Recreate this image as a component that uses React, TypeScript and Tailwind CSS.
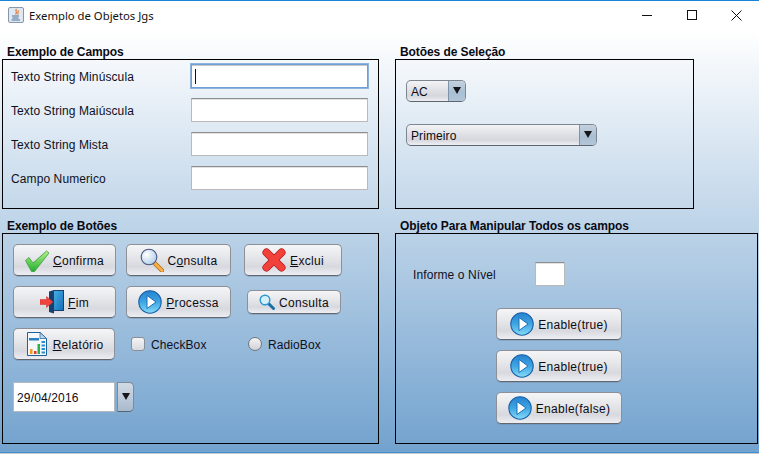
import type { ReactNode } from "react"

const btn =
  "flex items-center justify-center gap-[4px] rounded-[5px] border border-[#8d9096] border-b-[#63666c] bg-[linear-gradient(#f5f5f7,#e6e7ea_40%,#d8d9df_72%,#eceef2)] text-[12px] text-[#0c0c14] shadow-[0_1px_0_#5f7fa055]"
const btnText = "pt-[2px] tracking-[0.3px]"
const label = "pt-[2px] text-[12px] tracking-[0.1px] text-[#10101c]"
const field = "border border-[#b9b9b9] border-t-[#8e8e8e] bg-white shadow-[inset_0_1px_0_#e2e2e2]"
const combo =
  "flex items-stretch overflow-hidden rounded-[5px] border border-[#7d8590] border-b-[#5d6570] bg-[linear-gradient(#f4f4f6,#e0e1e6_45%,#d6d7dd_75%,#eeeff3)]"
const arrowPart = "flex w-[17px] items-center justify-center border-l border-[#7d93aa] bg-[linear-gradient(#c4d1de,#a9bfd4_60%,#b3c6d8)]"

function Arrow() {
  return (
    <svg width="8" height="7" viewBox="0 0 8 7" className="-mt-[2px]">
      <path d="M0 0h8L4 7z" fill="#15151a" />
    </svg>
  )
}

function CheckIcon() {
  return (
    <svg width="24" height="24" viewBox="0 0 24 24">
      <defs>
        <linearGradient id="chk" x1="0" y1="0" x2="0" y2="1">
          <stop offset="0" stopColor="#b4f08a" />
          <stop offset="1" stopColor="#22b030" />
        </linearGradient>
      </defs>
      <path d="M0.5 12.5L4 9.5L8 15L21.5 3L24 5L9.5 23.5L6.5 23.5Z" fill="url(#chk)" stroke="#3d9a3c" strokeWidth="0.8" strokeLinejoin="round" />
    </svg>
  )
}

function SearchIcon() {
  return (
    <svg width="24" height="24" viewBox="0 0 24 24">
      <defs>
        <radialGradient id="lens" cx="0.35" cy="0.35" r="0.8">
          <stop offset="0" stopColor="#ffffff" />
          <stop offset="1" stopColor="#a6c8e6" />
        </radialGradient>
      </defs>
      <path d="M14.5 15L22 22.5" stroke="#b06a14" strokeWidth="4.4" strokeLinecap="round" />
      <path d="M14.5 15L22 22.5" stroke="#f7ae45" strokeWidth="3" strokeLinecap="round" />
      <circle cx="9" cy="9" r="7.8" fill="url(#lens)" stroke="#4a5680" strokeWidth="1.1" />
    </svg>
  )
}

function SmallSearchIcon() {
  return (
    <svg width="16" height="16" viewBox="0 0 16 16">
      <path d="M9.5 9.5L14.5 14.5" stroke="#1c6ea8" strokeWidth="3" strokeLinecap="round" />
      <circle cx="6" cy="6" r="4.8" fill="#d6f0fb" stroke="#2f97d0" strokeWidth="1.4" />
    </svg>
  )
}

function CrossIcon() {
  return (
    <svg width="24" height="24" viewBox="0 0 24 24">
      <path d="M4.5 4.5L19.5 19.5M19.5 4.5L4.5 19.5" stroke="#b01c1c" strokeWidth="8" strokeLinecap="round" />
      <path d="M4.5 4.5L19.5 19.5M19.5 4.5L4.5 19.5" stroke="#f2403a" strokeWidth="6.6" strokeLinecap="round" />
    </svg>
  )
}

function DoorIcon() {
  return (
    <svg width="24" height="24" viewBox="0 0 24 24">
      <defs>
        <linearGradient id="door" x1="0" y1="0" x2="1" y2="1">
          <stop offset="0" stopColor="#48aee6" />
          <stop offset="1" stopColor="#1270b8" />
        </linearGradient>
      </defs>
      <path d="M9 1.5L14 0H24V21H14V23.5L9 22Z" fill="#17406e" />
      <path d="M14 1H23V20H14Z" fill="url(#door)" />
      <path d="M0 9.5H6.5V6.5L13 12L6.5 17.5V14.5H0Z" fill="#f0433c" stroke="#c9302a" strokeWidth="0.5" />
    </svg>
  )
}

function PlayIcon() {
  return (
    <svg width="24" height="24" viewBox="0 0 24 24">
      <defs>
        <linearGradient id="play" x1="0" y1="0" x2="0" y2="1">
          <stop offset="0" stopColor="#2582cf" />
          <stop offset="0.5" stopColor="#3ea5e2" />
          <stop offset="1" stopColor="#86dbf8" />
        </linearGradient>
      </defs>
      <circle cx="12" cy="12" r="11.2" fill="url(#play)" stroke="#1a5ea6" strokeWidth="1.1" />
      <path d="M9 5.5L18 12L9 18.5Z" fill="#fff" stroke="#1e6fb8" strokeWidth="1" strokeLinejoin="round" />
    </svg>
  )
}

function ReportIcon() {
  return (
    <svg width="24" height="24" viewBox="0 0 24 24">
      <path d="M2.5 0.5H15L21.5 6.5V23.5H2.5Z" fill="#f4f8fc" stroke="#1f6098" />
      <path d="M15 0.5V6.5H21.5Z" fill="#bcd4ea" stroke="#1f6098" strokeWidth="0.7" />
      <path d="M4 6H14V8.5H4Z" fill="#2a7fc0" />
      <path d="M5 17H7.5V22H5Z" fill="#f59a23" />
      <path d="M9 19H11.5V22H9Z" fill="#e03a30" />
      <path d="M12.5 12H15V22H12.5Z" fill="#2fb04a" />
      <path d="M16.5 9H20V11H16.5ZM16.5 12.5H20V14.5H16.5ZM16.5 16H20V18H16.5ZM16.5 19.5H20V21.5H16.5Z" fill="#2a8fd0" />
    </svg>
  )
}

function JavaIcon() {
  return (
    <svg width="16" height="16" viewBox="0 0 16 16">
      <rect x="0.5" y="0.5" width="15" height="15" rx="1.5" fill="#dfe8f1" stroke="#8797ab" />
      <path d="M8.5 2C6.5 4 10 5 7.5 7.5M10.5 3.5C9 5 11 5.5 9.5 7.5" stroke="#e0722a" strokeWidth="1.1" fill="none" />
      <path d="M4 9H11M4.5 11H10.5M3.5 13H12" stroke="#4c7199" strokeWidth="1" />
    </svg>
  )
}

function Section({ title, width, height, children }: { title: string; width: string; height: string; children: ReactNode }) {
  return (
    <div className={`flex flex-col ${width}`}>
      <div className="flex flex-1 items-end pl-[5px] text-[12px] leading-[14px] font-bold tracking-[-0.08px] text-[#0a0a14]">{title}</div>
      <div className={`border border-black ${height}`}>{children}</div>
    </div>
  )
}

function CampoRow({ text, focused }: { text: string; focused?: boolean }) {
  return (
    <div className="flex h-[24px] items-center pl-[8px]">
      <span className={`w-[180px] ${label}`}>{text}</span>
      {focused ? (
        <div className="flex h-[24px] w-[177px] items-center border border-[#6f9fd6] bg-white pl-[3px] shadow-[0_0_0_1px_#8fb4dc,inset_0_1px_0_#c9c9c9]">
          <div className="h-[15px] w-[1px] bg-[#111]" />
        </div>
      ) : (
        <div className={`h-[24px] w-[177px] ${field}`} />
      )}
    </div>
  )
}

export default function App() {
  return (
    <div className="flex h-[454px] w-[759px] flex-col overflow-hidden border-t border-[#1a84d8] bg-white font-['Liberation_Sans',Arial,sans-serif]">
      {/* Title bar */}
      <div className="flex h-[29px] items-center bg-white">
        <div className="flex flex-1 items-center gap-[5px] pl-[8px] pb-[1px]">
          <JavaIcon />
          <span className="pt-[2px] font-['Noto_Sans',sans-serif] text-[11.3px] text-[#111]">Exemplo de Objetos Jgs</span>
        </div>
        <div className="flex h-[29px] w-[135px] pb-[1px]">
          <div className="flex w-[45px] items-center justify-center">
            <div className="h-[1px] w-[10px] bg-[#111]" />
          </div>
          <div className="flex w-[45px] items-center justify-center">
            <div className="h-[10px] w-[10px] border border-[#111]" />
          </div>
          <div className="flex w-[45px] items-center justify-center">
            <svg width="11" height="11" viewBox="0 0 11 11">
              <path d="M0.5 0.5L10.5 10.5M10.5 0.5L0.5 10.5" stroke="#111" fill="none" />
            </svg>
          </div>
        </div>
      </div>

      {/* Content */}
      <div className="flex h-[422px] flex-col bg-[linear-gradient(#ffffff,#72a2ce)] pl-[2px]">
        <div className="flex h-[179px] gap-[16px]">
          <Section title="Exemplo de Campos" width="w-[377px]" height="h-[150px]">
            <div className="flex flex-col gap-[10px] pt-[4px]">
              <CampoRow text="Texto String Minúscula" focused />
              <CampoRow text="Texto String Maiúscula" />
              <CampoRow text="Texto String Mista" />
              <CampoRow text="Campo Numerico" />
            </div>
          </Section>
          <Section title="Botões de Seleção" width="w-[299px]" height="h-[150px]">
            <div className="flex flex-col gap-[22px] pl-[10px] pt-[20px]">
              <div className={`${combo} h-[22px] w-[60px]`}>
                <span className="flex-1 pl-[4px] text-[12px] leading-[22px] text-[#0c0c14]">AC</span>
                <div className={arrowPart}>
                  <Arrow />
                </div>
              </div>
              <div className={`${combo} h-[22px] w-[191px]`}>
                <span className="flex-1 pl-[4px] text-[12px] leading-[22px] tracking-[0.1px] text-[#0c0c14]">Primeiro</span>
                <div className={arrowPart}>
                  <Arrow />
                </div>
              </div>
            </div>
          </Section>
        </div>

        <div className="flex h-[235px] gap-[16px]">
          <Section title="Exemplo de Botões" width="w-[377px]" height="h-[211px]">
            <div className="flex flex-col gap-[10px] pl-[10px] pt-[10px]">
              <div className="flex gap-[10px]">
                <button className={`${btn} h-[32px] w-[103px]`}>
                  <CheckIcon />
                  <span className={btnText}><u>C</u>onfirma</span>
                </button>
                <button className={`${btn} h-[32px] w-[105px]`}>
                  <SearchIcon />
                  <span className={btnText}>C<u>o</u>nsulta</span>
                </button>
                <button className={`${btn} ml-[3px] h-[32px] w-[98px]`}>
                  <CrossIcon />
                  <span className={btnText}><u>E</u>xclui</span>
                </button>
              </div>
              <div className="flex items-center gap-[10px]">
                <button className={`${btn} h-[32px] w-[103px]`}>
                  <DoorIcon />
                  <span className={btnText}><u>F</u>im</span>
                </button>
                <button className={`${btn} h-[32px] w-[105px]`}>
                  <PlayIcon />
                  <span className={btnText}><u>P</u>rocessa</span>
                </button>
                <button className={`${btn} ml-[6px] h-[24px] w-[94px]`}>
                  <SmallSearchIcon />
                  <span className={btnText}>Consulta</span>
                </button>
              </div>
              <div className="flex items-center">
                <button className={`${btn} h-[32px] w-[102px]`}>
                  <ReportIcon />
                  <span className={btnText}><u>R</u>elatório</span>
                </button>
                <div className="ml-[16px] flex w-[117px] items-center gap-[6px]">
                  <div className="h-[14px] w-[14px] rounded-[3px] border border-[#8a8e96] bg-[linear-gradient(#f4f4f6,#d9dae0)]" />
                  <span className={label}>CheckBox</span>
                </div>
                <div className="flex items-center gap-[6px]">
                  <div className="h-[14px] w-[14px] rounded-full border border-[#72767e] bg-[linear-gradient(#f4f4f6,#d0d1d7)]" />
                  <span className={label}>RadioBox</span>
                </div>
              </div>
              <div className="mt-[12px] flex gap-[2px]">
                <div className="flex h-[30px] w-[102px] items-center border border-[#b4b9c0] bg-white pl-[3px] pt-[2px] text-[12px] tracking-[0.15px] text-[#0c0c14]">29/04/2016</div>
                <div className="flex h-[30px] w-[17px] items-center justify-center rounded-r-[5px] border border-[#7d8a98] border-b-[#58626e] bg-[linear-gradient(#d2dbe4,#a9bace)]">
                  <Arrow />
                </div>
              </div>
            </div>
          </Section>
          <Section title="Objeto Para Manipular Todos os campos" width="w-[363px]" height="h-[211px]">
            <div className="flex flex-col pt-[28px]">
              <div className="flex h-[24px] items-center pl-[17px]">
                <span className={`w-[122px] ${label}`}>Informe o Nível</span>
                <div className={`h-[24px] w-[30px] ${field}`} />
              </div>
              <div className="ml-[100px] mt-[22px] flex flex-col gap-[10px]">
                <button className={`${btn} h-[32px] w-[126px]`}>
                  <PlayIcon />
                  <span className={btnText}>Enable(true)</span>
                </button>
                <button className={`${btn} h-[32px] w-[126px]`}>
                  <PlayIcon />
                  <span className={btnText}>Enable(true)</span>
                </button>
                <button className={`${btn} h-[32px] w-[126px]`}>
                  <PlayIcon />
                  <span className={btnText}>Enable(false)</span>
                </button>
              </div>
            </div>
          </Section>
        </div>

        <div className="flex-1" />
      </div>
      <div className="h-[1px] bg-[#3f8fd6]" />
      <div className="h-[1px] bg-[#c9c9c9]" />
    </div>
  )
}
